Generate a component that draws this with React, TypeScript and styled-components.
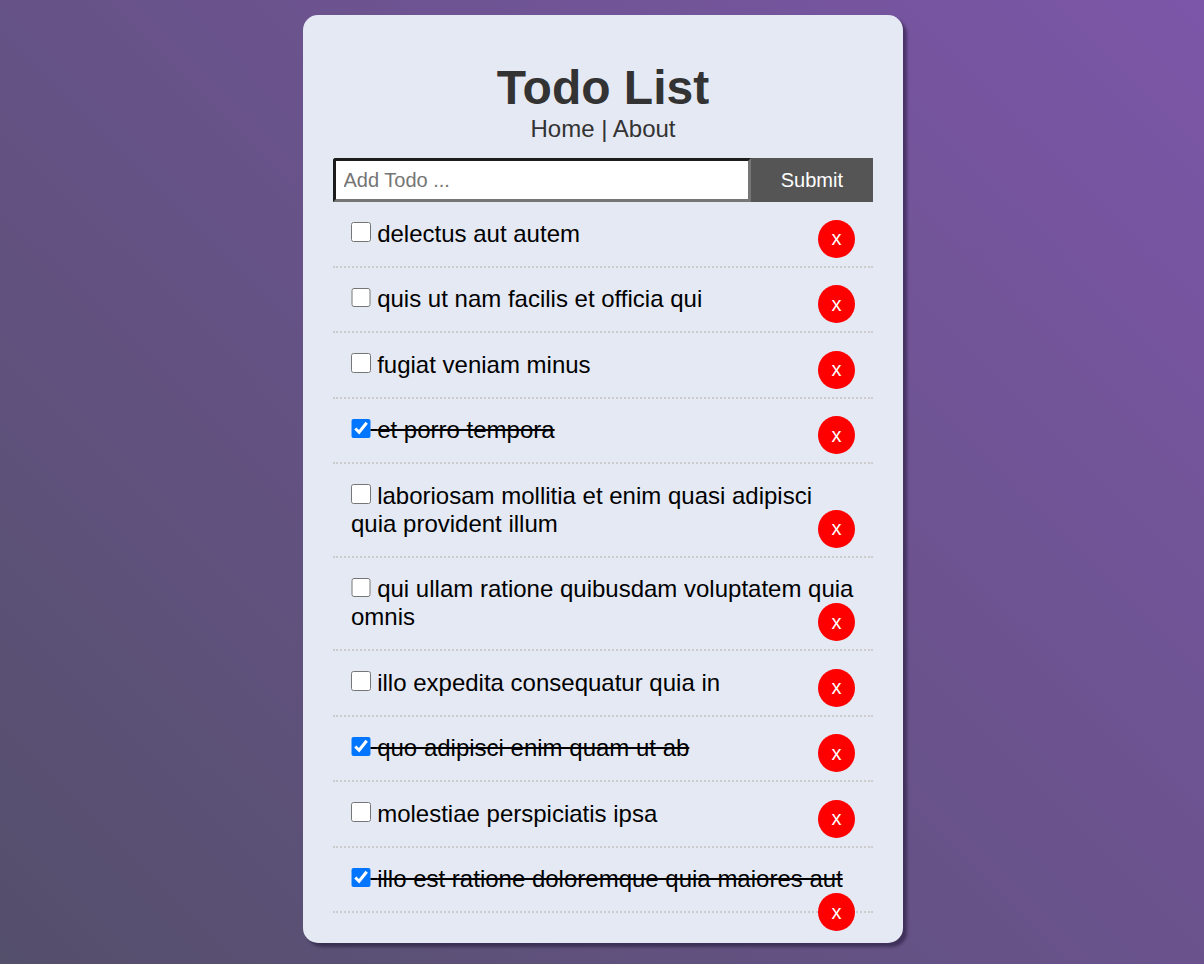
import React, { useState } from 'react';
import styled, { createGlobalStyle } from 'styled-components';

type Todo = { id: number; title: string; completed: boolean };

const initialTodos: Todo[] = [
  { id: 1, title: 'delectus aut autem', completed: false },
  { id: 2, title: 'quis ut nam facilis et officia qui', completed: false },
  { id: 3, title: 'fugiat veniam minus', completed: false },
  { id: 4, title: 'et porro tempora', completed: true },
  { id: 5, title: 'laboriosam mollitia et enim quasi adipisci quia provident illum', completed: false },
  { id: 6, title: 'qui ullam ratione quibusdam voluptatem quia omnis', completed: false },
  { id: 7, title: 'illo expedita consequatur quia in', completed: false },
  { id: 8, title: 'quo adipisci enim quam ut ab', completed: true },
  { id: 9, title: 'molestiae perspiciatis ipsa', completed: false },
  { id: 10, title: 'illo est ratione doloremque quia maiores aut', completed: true },
];

const App = () => {
  const [todos, setTodos] = useState<Todo[]>(initialTodos);
  const [title, setTitle] = useState('');

  const toggle = (id: number) =>
    setTodos(todos.map((t) => (t.id === id ? { ...t, completed: !t.completed } : t)));
  const remove = (id: number) => setTodos(todos.filter((t) => t.id !== id));
  const onSubmit = (e: React.FormEvent) => {
    e.preventDefault();
    if (!title.trim()) return;
    setTodos([...todos, { id: Date.now(), title, completed: false }]);
    setTitle('');
  };

  return (
    <Page>
      <GlobalStyle />
      <Card>
        <Header>
          <Title>Todo List</Title>
          <Nav>
            <NavLink href="#/">Home</NavLink> | <NavLink href="#/about">About</NavLink>
          </Nav>
        </Header>
        <AddForm onSubmit={onSubmit}>
          <TextInput
            type="text"
            placeholder="Add Todo ..."
            value={title}
            onChange={(e) => setTitle(e.target.value)}
          />
          <SubmitButton type="submit">Submit</SubmitButton>
        </AddForm>
        {todos.map((todo) => (
          <Item key={todo.id} $done={todo.completed}>
            <Check type="checkbox" checked={todo.completed} onChange={() => toggle(todo.id)} />{' '}
            {todo.title}
            <DeleteButton onClick={() => remove(todo.id)}>x</DeleteButton>
          </Item>
        ))}
      </Card>
    </Page>
  );
};

export default App;

const GlobalStyle = createGlobalStyle`
  * {
    box-sizing: border-box;
  }
  body {
    margin: 0;
    font-family: "Liberation Sans", Arial, sans-serif;
  }
`;

const Page = styled.div`
  min-height: 100vh;
  padding: 15px 0 21px 2px;
  background: linear-gradient(45deg, #544f6b 0%, #7c56a8 100%);
`;

const Card = styled.div`
  width: 600px;
  margin: 0 auto;
  padding: 30px;
  background: #e5e9f4;
  border-radius: 15px;
  box-shadow: 4px 4px 3px rgba(20, 10, 40, 0.45);
`;

const Header = styled.header`
  text-align: center;
  padding: 15px;
  color: #333;
`;

const Title = styled.h1`
  margin: 0;
  font-size: 48px;
  font-weight: bold;
  line-height: normal;
`;

const Nav = styled.div`
  font-size: 24px;
  line-height: normal;
`;

const NavLink = styled.a`
  color: #333;
  text-decoration: none;
`;

const AddForm = styled.form`
  display: flex;
`;

const TextInput = styled.input`
  flex: 10;
  min-width: 0;
  padding: 7.5px;
  font-family: inherit;
  font-size: 20px;
  line-height: normal;
  background: #fff;
  border: 3px solid;
  border-color: #1c1c1c #767676 #767676 #1c1c1c;
  border-radius: 3px 0 0 0;
  outline: none;

  &::placeholder {
    color: #757575;
  }
`;

const SubmitButton = styled.button`
  flex: 1;
  padding: 10.5px 30px;
  border: none;
  background: #555;
  color: #fff;
  font-family: inherit;
  font-size: 20px;
  line-height: normal;
  cursor: pointer;
`;

const Item = styled.p<{ $done: boolean }>`
  margin: 0;
  padding: 17.75px 18px;
  border-bottom: 2px dotted #ccc;
  color: #000;
  font-size: 24px;
  line-height: normal;
  text-decoration: ${(p) => (p.$done ? 'line-through' : 'none')};
`;

const Check = styled.input`
  width: 19.5px;
  height: 19.5px;
  margin: 0;
  vertical-align: baseline;
`;

const DeleteButton = styled.button`
  float: right;
  padding: 7.5px 13.5px;
  border: none;
  border-radius: 50%;
  background: #ff0000;
  color: #fff;
  font-family: inherit;
  font-size: 20px;
  line-height: normal;
  cursor: pointer;
`;
